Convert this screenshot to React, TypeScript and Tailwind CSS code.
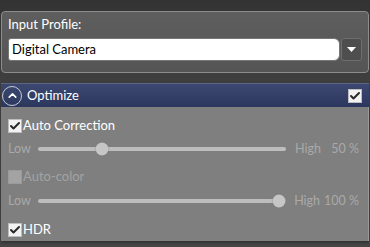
import { Check, ChevronUp } from "lucide-react";

const font = { fontFamily: 'Lato, "Segoe UI", "Noto Sans", sans-serif' };

const Box = ({ checked, disabled }: { checked?: boolean; disabled?: boolean }) => (
  <span
    className={`flex h-[14px] w-[14px] shrink-0 items-center justify-center border ${
      disabled ? "border-[#9a9a9a] bg-[#a3a3a3]" : "border-[#bdbdbd] bg-[#f2f2f2]"
    }`}
  >
    {checked && <Check className="h-[12px] w-[12px] text-[#2a2a2a]" strokeWidth={4} />}
  </span>
);

const Slider = ({ pct, className }: { pct: number; className?: string }) => (
  <div
    className={`flex h-[24px] items-center whitespace-nowrap pl-[7px] pr-[9px] text-[12.5px] text-[#a9a9a9] ${className}`}
  >
    <span className="w-[30px]">Low</span>
    <div className="relative h-[4px] w-[248px] rounded-full bg-[#bdbdbd]">
      <span
        className="absolute top-1/2 h-[13px] w-[13px] -translate-x-1/2 -translate-y-1/2 rounded-full bg-[#c6c6c6] shadow-[0_0_1px_#777]"
        style={{ left: `${pct === 100 ? 97.5 : 26}%` }}
      />
    </div>
    <span className="ml-[9px] w-[30px]">High</span>
    <span className="flex-1 text-right">{pct} %</span>
  </div>
);

export default function App() {
  return (
    <div
      style={font}
      className="h-[247px] w-[370px] overflow-hidden bg-gradient-to-b from-[#333333] via-[#454545] to-[#474747] pt-[11px]"
    >
      <div className="mx-[1px] h-[62px] rounded-[4px] border border-[#8c8c8c] bg-gradient-to-b from-[#5e5e5e] to-[#555555] px-[6px] pt-[3px]">
        <div className="text-[13px] leading-[18px] text-white">Input Profile:</div>
        <div className="mt-[5px] flex h-[23px] gap-[1px]">
          <div className="flex flex-1 items-center rounded-l-[3px] rounded-r-[6px] border border-[#777] bg-white pl-[3px] text-[13px] text-black">
            Digital Camera
          </div>
          <div className="flex w-[21px] items-center justify-center rounded-[3px] border border-[#6e6e6e] bg-[#4e4e4e]">
            <svg width="9" height="5" viewBox="0 0 9 5">
              <path d="M0 0h9L4.5 5z" fill="#fff" />
            </svg>
          </div>
        </div>
      </div>
      <div className="mt-[10px] mx-[1px] shadow-[0_2px_3px_#333]">
        <div className="flex h-[24px] items-center border-t border-[#5a6584] bg-gradient-to-b from-[#3c4870] to-[#2b375d] pr-[7px]">
          <span className="ml-[1px] flex h-[20px] w-[20px] items-center justify-center rounded-full border border-[#c9cbd6]">
            <ChevronUp className="h-[13px] w-[13px] text-white" strokeWidth={3} />
          </span>
          <span className="ml-[5px] flex-1 text-[13px] text-white">Optimize</span>
          <Box checked />
        </div>
        <div className="h-[134px] border-r border-[#999] bg-[#7f7f7f] pt-[9px]">
          <div className="flex h-[20px] items-center pl-[7px] text-[13px] text-white">
            <Box checked />
            <span className="ml-[1px]">Auto Correction</span>
          </div>
          <Slider pct={50} className="mt-[1px]" />
          <div className="mt-[6px] flex h-[20px] items-center pl-[7px] text-[13px] text-[#a3a3a3]">
            <Box disabled />
            <span className="ml-[1px]">Auto-color</span>
          </div>
          <Slider pct={100} className="mt-[2px]" />
          <div className="mt-[7px] flex h-[20px] items-center pl-[7px] text-[13px] text-white">
            <Box checked />
            <span className="ml-[1px]">HDR</span>
          </div>
        </div>
      </div>
    </div>
  );
}
